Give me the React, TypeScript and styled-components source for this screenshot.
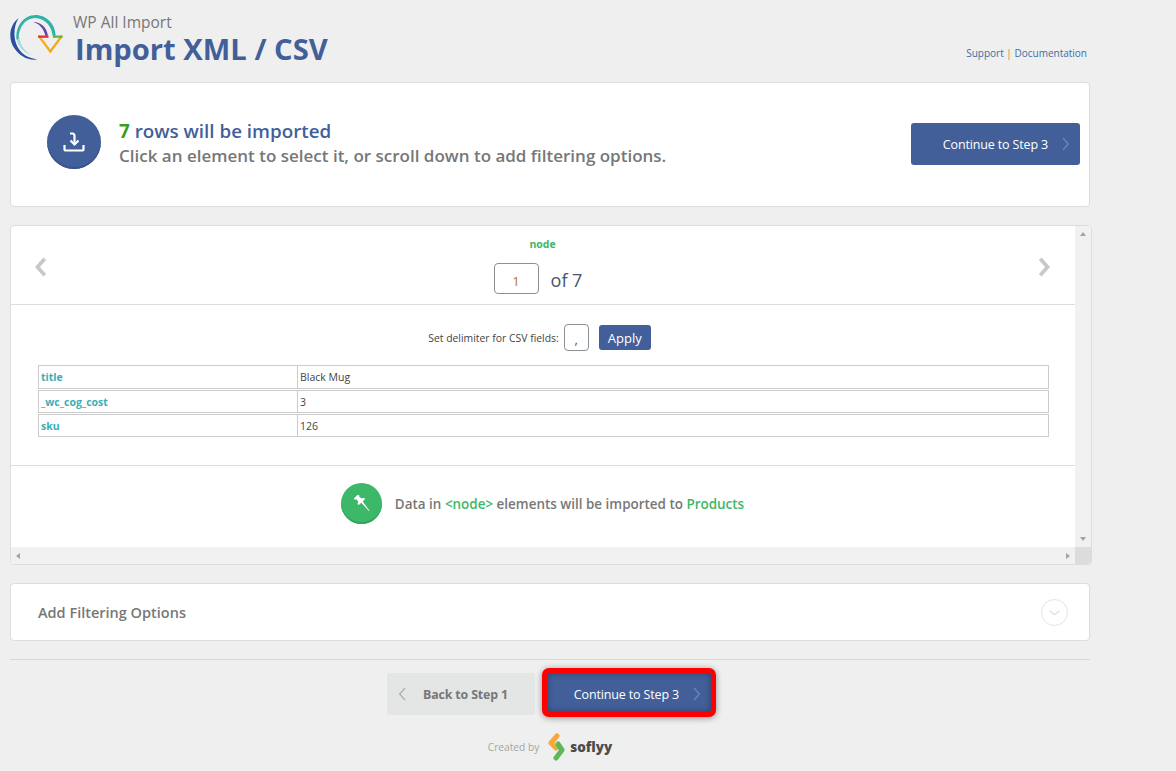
import React from 'react';
import styled, { createGlobalStyle } from 'styled-components';

const GlobalStyle = createGlobalStyle`
  html, body { margin: 0; padding: 0; background: #efefef; }
  body { font-family: "Open Sans", "Liberation Sans", sans-serif; color: #777; }
  * { box-sizing: border-box; }
`;

const BLUE = '#425f9a';
const GREEN = '#3cb868';

const Page = styled.div`
  width: 1176px;
  height: 771px;
  overflow: hidden;
  padding: 14px 86px 0 10px;
`;
const Header = styled.header`
  display: flex;
  height: 68px;
`;
const Brand = styled.div`
  margin-left: 12px;
  margin-top: -2px;
`;
const Product = styled.div`
  margin-left: -2px;
  font-size: 15.5px;
  line-height: 20px;
  color: #777;
`;
const Title = styled.h1`
  margin: 1px 0 0;
  font-size: 29.2px;
  line-height: 32px;
  font-weight: 700;
  color: ${BLUE};
`;
const HelpLinks = styled.div`
  margin-left: auto;
  margin-right: 3px;
  margin-top: 32px;
  font-size: 10px;
  line-height: 14px;
  color: #c5823f;
`;
const HelpLink = styled.a`
  color: #3a6ea5;
  text-decoration: none;
`;
const Card = styled.section<{ $height: number }>`
  height: ${({ $height }) => $height}px;
  background: #fff;
  border: 1px solid #ddd;
  border-radius: 4px;
  display: flex;
  align-items: center;
`;
const Summary = styled(Card)`
  padding: 0 9px 0 36px;
`;
const RoundIcon = styled.div<{ $size: number; $bg: string; $shade: string; $lift?: number }>`
  width: ${({ $size }) => $size}px;
  height: ${({ $size }) => $size}px;
  margin-bottom: ${({ $lift }) => $lift ?? 0}px;
  flex: none;
  border-radius: 50%;
  background: ${({ $bg }) => $bg};
  box-shadow: inset 0 -2px 0 ${({ $shade }) => $shade};
  display: flex;
  align-items: center;
  justify-content: center;
`;
const SummaryText = styled.div`
  margin-left: 18px;
  margin-bottom: 3px;
  flex: 1;
`;
const RowsLine = styled.div`
  font-size: 18.8px;
  line-height: 25px;
  font-weight: 600;
  color: ${BLUE};
`;
const Count = styled.b`
  color: #3a9e1f;
  font-weight: 700;
`;
const Hint = styled.div`
  font-size: 17px;
  line-height: 24px;
  font-weight: 600;
  color: #777;
`;
const StepButton = styled.button<{ $width: number; $lift?: number }>`
  width: ${({ $width }) => $width}px;
  height: 42px;
  margin-bottom: ${({ $lift }) => $lift ?? 0}px;
  flex: none;
  border: 0;
  border-radius: 3px;
  background: ${BLUE};
  color: #fff;
  font: 400 12.5px "Open Sans", sans-serif;
  letter-spacing: -0.15px;
  display: flex;
  align-items: center;
  justify-content: flex-end;
  gap: 9px;
  padding: 0 7px 0 0;
`;
const Panel = styled.section`
  margin-top: 18px;
  width: 1082px;
  height: 340px;
  border: 1px solid #ddd;
  border-radius: 4px;
  background: #fff;
  display: grid;
  grid-template-columns: 1fr 16px;
  grid-template-rows: 1fr 17px;
  overflow: hidden;
`;
const PanelBody = styled.div`
  min-width: 0;
`;
const Pager = styled.div`
  height: 79px;
  border-bottom: 1px solid #ddd;
  padding: 4px 21px 0 20px;
  display: grid;
  grid-template-columns: 22px 1fr 22px;
  align-items: center;
`;
const PagerCenter = styled.div`
  text-align: center;
`;
const NodeName = styled.div`
  font-size: 10.5px;
  line-height: 14px;
  font-weight: 700;
  color: ${GREEN};
  margin-top: -3px;
`;
const PagerRow = styled.div`
  margin-top: 12px;
  display: flex;
  justify-content: center;
  align-items: center;
  gap: 12px;
`;
const BoxInput = styled.div<{ $width: number; $height: number; $color: string; $nudge: number }>`
  width: ${({ $width }) => $width}px;
  height: ${({ $height }) => $height}px;
  border: 1px solid #8c8f94;
  border-radius: 4px;
  background: #fff;
  color: ${({ $color }) => $color};
  display: flex;
  align-items: center;
  justify-content: center;
  padding-top: ${({ $nudge }) => $nudge}px;
  font-size: 13px;
`;
const OfTotal = styled.span`
  font-size: 18px;
  color: #46566e;
  margin: 2px 9px 0 0;
`;
const Delimiter = styled.div`
  margin-top: 19px;
  height: 27px;
  padding-right: 7px;
  display: flex;
  justify-content: center;
  align-items: center;
  font-size: 10.4px;
  color: #444;
  gap: 5px;
`;
const ApplyButton = styled.button`
  margin-left: 5px;
  width: 52px;
  height: 25px;
  border: 0;
  border-radius: 3px;
  background: ${BLUE};
  color: #fff;
  font: 400 13px "Open Sans", sans-serif;
`;
const RecordTable = styled.table`
  margin: 13px 0 0 27px;
  width: 1011px;
  table-layout: fixed;
  border-collapse: separate;
  border-spacing: 0 1px;
`;
const KeyCell = styled.td`
  width: 260px;
  height: 23px;
  padding: 0 2px;
  border: 1px solid #ccc;
  font-size: 10.5px;
  font-weight: 700;
  color: #3caeb5;
  tr:first-child & { height: 24px; }
`;
const ValueCell = styled.td`
  height: 23px;
  padding: 0 2px;
  border: 1px solid #ccc;
  border-left-width: 0;
  font-size: 10.5px;
  color: #444;
  tr:first-child & { height: 24px; }
`;
const ImportNote = styled.div`
  margin-top: 27px;
  border-top: 1px solid #ddd;
  padding: 17px 1px 0 0;
  display: flex;
  justify-content: center;
  align-items: center;
  gap: 13px;
  font-size: 13.45px;
  font-weight: 600;
  color: #777;
`;
const Accent = styled.span`
  color: ${GREEN};
`;
const ScrollTrack = styled.div<{ $vertical?: boolean }>`
  background: #f1f1f1;
  display: flex;
  flex-direction: ${({ $vertical }) => ($vertical ? 'column' : 'row')};
  justify-content: space-between;
  align-items: center;
  padding: ${({ $vertical }) => ($vertical ? '6px 0' : '0 5px')};
`;
const ScrollCorner = styled.div`
  background: #dcdcdc;
`;
const Arrow = styled.i<{ $dir: 'up' | 'down' | 'left' | 'right' }>`
  width: 0;
  height: 0;
  border-style: solid;
  border-color: transparent;
  border-width: ${({ $dir }) => ($dir === 'up' || $dir === 'down' ? '4px 3.5px' : '3.5px 4px')};
  ${({ $dir }) => `border-${{ up: 'bottom', down: 'top', left: 'right', right: 'left' }[$dir]}-color: #a3a3a3;`}
  margin: ${({ $dir }) => ({ up: '-4px 0 0', down: '0 0 -4px', left: '0 0 0 -4px', right: '0 -4px 0 0' }[$dir])};
`;
const Filtering = styled(Card)`
  margin-top: 18px;
  padding: 0 21px 0 27px;
  justify-content: space-between;
`;
const FilteringTitle = styled.h2`
  margin: 0;
  font-size: 14.5px;
  font-weight: 600;
  color: #777;
`;
const ExpandCircle = styled.div`
  width: 27px;
  height: 27px;
  border: 1px solid #e4e4e4;
  border-radius: 50%;
  display: flex;
  align-items: center;
  justify-content: center;
`;
const Divider = styled.hr`
  margin: 18px 0 0;
  border: 0;
  border-top: 1px solid #d8d8d8;
`;
const Footer = styled.div`
  margin-top: 8px;
  display: flex;
  justify-content: center;
  align-items: center;
  gap: 7px;
  padding-left: 3px;
`;
const BackButton = styled.button`
  width: 148px;
  height: 42px;
  border: 0;
  border-radius: 2px;
  background: #e4e6e6;
  color: #777;
  font: 700 12.4px "Open Sans", sans-serif;
  letter-spacing: -0.15px;
  display: flex;
  align-items: center;
  padding: 0 0 0 8px;
  gap: 12px;
`;
const HighlightedButton = styled.div`
  margin-bottom: 3px;
  border: 5px solid #f00;
  border-radius: 7px;
  background: ${BLUE};
  box-shadow: 0 1px 6px rgba(0, 0, 0, 0.4);
  overflow: hidden;
  ${StepButton} {
    height: 39px;
    padding-top: 3px;
    border-radius: 2px;
    box-shadow: inset 0 0 6px rgba(0, 0, 0, 0.35);
  }
`;
const Credit = styled.div`
  margin-top: 13px;
  display: flex;
  justify-content: center;
  align-items: center;
  gap: 9px;
  font-size: 10.2px;
  color: #a5a5a5;
`;
const SoflyyName = styled.span`
  font-size: 13.5px;
  font-weight: 800;
  color: #4c4c4c;
  margin-left: -5px;
`;

const Chevron = ({ dir, size, color, width }: { dir: 'left' | 'right' | 'down'; size: number; color: string; width: number }) => {
  const points = { left: '15,3 7,12 15,21', right: '9,3 17,12 9,21', down: '3,9 12,16 21,9' }[dir];
  return (
    <svg width={size} height={size} viewBox="0 0 24 24" fill="none" style={{ flex: 'none' }}>
      <polyline points={points} stroke={color} strokeWidth={width} />
    </svg>
  );
};

const Logo = () => (
  <svg width="53" height="47" viewBox="12 12 159 141" fill="none" style={{ flex: 'none' }}>
    <path d="M38 24 C10 45 5 85 25 115 C42 140 68 153 95 148 C65 146 40 130 30 100 C22 75 24 45 38 24 Z" fill="#2d4fa3" />
    <path d="M32 85 C35 110 55 130 82 137 C55 125 42 105 40 80 Z" fill="#9fdcd6" />
    <path d="M32 90 C26 48 55 15 88 15 C122 15 148 42 149 77 L140 77 C136 45 115 25 88 24 C60 24 38 50 38 85 Z" fill="#2fb3a8" />
    <path d="M82 36 C105 36 122 52 126 77 L118 77 C114 58 102 42 82 36 Z" fill="#6a3fa5" />
    <g strokeWidth="7" strokeLinecap="square">
      <polyline points="100,80 133,124" stroke="#f2b01e" />
      <polyline points="133,124 166,80" stroke="#f2a71b" />
      <polyline points="124,80 100,80" stroke="#e2342d" />
      <polyline points="166,80 144,80" stroke="#57b947" />
    </g>
  </svg>
);

const UploadIcon = () => (
  <svg width="22" height="22" viewBox="0 0 22 22" fill="none" stroke="#fff" strokeWidth="2.2">
    <path d="M7 2.5 H9.5 C11 2.5 11.5 3.5 11.5 5 V13" />
    <path d="M7.5 9.5 L11.5 13.5 L15.5 9.5" />
    <path d="M1.5 14 V18 C1.5 19 2 19.5 3 19.5 H19 C20 19.5 20.5 19 20.5 18 V14" />
  </svg>
);

const PinIcon = () => (
  <svg width="19" height="19" viewBox="0 0 22 22" fill="#fff">
    <path d="M6.5 1 L2 5.5 L3.6 6.6 L5.2 6 L7.2 9 L6.4 11.5 L7.8 12.8 L10.8 10 L19.8 20 L20.3 19.4 L12.4 8.6 L15.2 5.8 L13.8 4.4 L11.4 5.2 L8.4 3.2 L8.8 2 Z" />
  </svg>
);

const SoflyyLogo = () => (
  <svg width="18" height="28" viewBox="0 0 18 28" fill="none" strokeWidth="5" strokeLinecap="round" strokeLinejoin="round" style={{ flex: 'none' }}>
    <polyline points="9,3 3,10 8,15" stroke="#f5a93a" />
    <polyline points="10,11 14,17 8,25" stroke="#5cb85c" />
  </svg>
);

const fields = [
  ['title', 'Black Mug'],
  ['_wc_cog_cost', '3'],
  ['sku', '126'],
];

export default function App() {
  return (
    <Page>
      <GlobalStyle />
      <Header>
        <Logo />
        <Brand>
          <Product>WP All Import</Product>
          <Title>Import XML / CSV</Title>
        </Brand>
        <HelpLinks>
          <HelpLink>Support</HelpLink> | <HelpLink>Documentation</HelpLink>
        </HelpLinks>
      </Header>

      <Summary $height={125}>
        <RoundIcon $size={54} $bg={BLUE} $shade="#3a5488" $lift={5}>
          <UploadIcon />
        </RoundIcon>
        <SummaryText>
          <RowsLine>
            <Count>7</Count> rows will be imported
          </RowsLine>
          <Hint>Click an element to select it, or scroll down to add filtering options.</Hint>
        </SummaryText>
        <StepButton $width={169} $lift={1}>
          Continue to Step 3
          <Chevron dir="right" size={16} color="#6f86b5" width={2} />
        </StepButton>
      </Summary>

      <Panel>
        <PanelBody>
          <Pager>
            <Chevron dir="left" size={22} color="#c8c8c8" width={4} />
            <PagerCenter>
              <NodeName>node</NodeName>
              <PagerRow>
                <BoxInput $width={45} $height={31} $color="#b5762b" $nudge={5}>1</BoxInput>
                <OfTotal>of 7</OfTotal>
              </PagerRow>
            </PagerCenter>
            <Chevron dir="right" size={22} color="#c8c8c8" width={4} />
          </Pager>
          <Delimiter>
            Set delimiter for CSV fields:
            <BoxInput $width={25} $height={27} $color="#555" $nudge={3}>,</BoxInput>
            <ApplyButton>Apply</ApplyButton>
          </Delimiter>
          <RecordTable>
            <tbody>
              {fields.map(([key, value]) => (
                <tr key={key}>
                  <KeyCell>{key}</KeyCell>
                  <ValueCell>{value}</ValueCell>
                </tr>
              ))}
            </tbody>
          </RecordTable>
          <ImportNote>
            <RoundIcon $size={41} $bg={GREEN} $shade="#35a55d">
              <PinIcon />
            </RoundIcon>
            <span>
              Data in <Accent>&lt;node&gt;</Accent> elements will be imported to <Accent>Products</Accent>
            </span>
          </ImportNote>
        </PanelBody>
        <ScrollTrack $vertical>
          <Arrow $dir="up" />
          <Arrow $dir="down" />
        </ScrollTrack>
        <ScrollTrack>
          <Arrow $dir="left" />
          <Arrow $dir="right" />
        </ScrollTrack>
        <ScrollCorner />
      </Panel>

      <Filtering $height={58}>
        <FilteringTitle>Add Filtering Options</FilteringTitle>
        <ExpandCircle>
          <Chevron dir="down" size={13} color="#d5d5d5" width={2} />
        </ExpandCircle>
      </Filtering>

      <Divider />

      <Footer>
        <BackButton>
          <Chevron dir="left" size={16} color="#b0b0b0" width={2} />
          Back to Step 1
        </BackButton>
        <HighlightedButton>
          <StepButton $width={164}>
            Continue to Step 3
            <Chevron dir="right" size={16} color="#6f86b5" width={2} />
          </StepButton>
        </HighlightedButton>
      </Footer>

      <Credit>
        Created by
        <SoflyyLogo />
        <SoflyyName>soflyy</SoflyyName>
      </Credit>
    </Page>
  );
}
